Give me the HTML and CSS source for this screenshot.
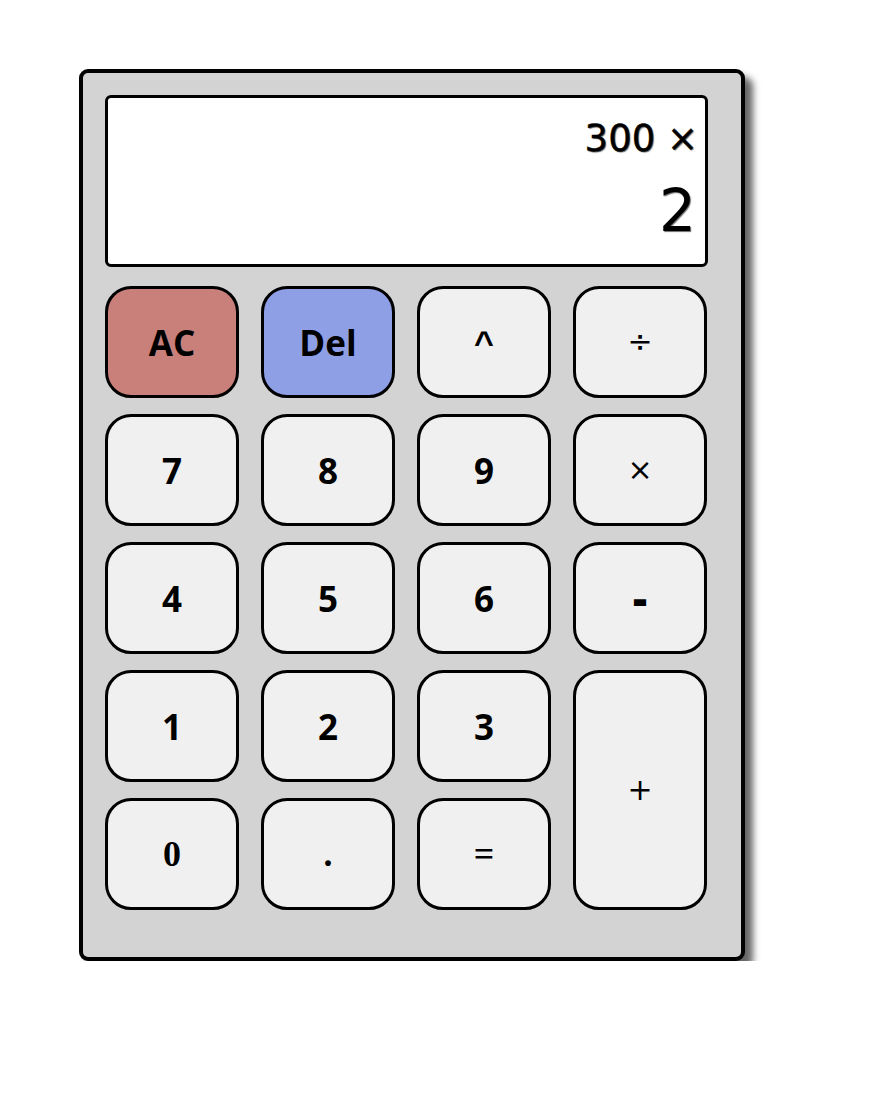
FILE: index.html
```html
<!DOCTYPE html>
<html>
<head>
<meta charset="utf-8">
<title>Calculator</title>
<link rel="stylesheet" href="styles.css">
</head>
<body>
<div class="calc">
  <div class="display">
    <div class="prev">300 ×</div>
    <div class="curr">2</div>
  </div>
  <div class="keys">
    <button class="key ac">AC</button>
    <button class="key del">Del</button>
    <button class="key caret">^</button>
    <button class="key sym">÷</button>
    <button class="key">7</button>
    <button class="key">8</button>
    <button class="key">9</button>
    <button class="key sym">×</button>
    <button class="key">4</button>
    <button class="key">5</button>
    <button class="key">6</button>
    <button class="key minus">-</button>
    <button class="key">1</button>
    <button class="key">2</button>
    <button class="key">3</button>
    <button class="key sym plus">+</button>
    <button class="key serif">0</button>
    <button class="key serif">.</button>
    <button class="key serif">=</button>
  </div>
</div>
</body>
</html>
```
FILE: styles.css
```css
html, body {
  margin: 0;
  padding: 0;
  background: #ffffff;
}

.calc {
  box-sizing: border-box;
  width: 666px;
  height: 892px;
  margin: 69px 0 0 79px;
  padding: 22px 33px 0 22px;
  background: #d3d3d3;
  border: 4px solid #000;
  border-radius: 9px;
  box-shadow: 8px 8px 7px #666666;
}

.display {
  box-sizing: border-box;
  width: 603px;
  height: 172px;
  background: #ffffff;
  border: 3px solid #000;
  border-radius: 6px;
  padding: 21px 7px 0 0;
  text-align: right;
  font-family: "DejaVu Sans", sans-serif;
  color: #000;
  text-shadow: 1px 1px 1px #6a6a6a;
}

.prev {
  font-size: 37px;
  line-height: 40px;
  -webkit-text-stroke: 0.4px #000;
}

.curr {
  font-size: 58px;
  line-height: 66px;
  margin-top: 19px;
  padding-right: 2px;
}

.keys {
  margin-top: 19px;
  display: grid;
  grid-template-columns: repeat(4, 134px);
  grid-template-rows: repeat(5, 112px);
  column-gap: 22px;
  row-gap: 16px;
  width: 602px;
}

.key {
  box-sizing: border-box;
  margin: 0;
  padding: 0;
  background: #f0f0f0;
  border: 3px solid #000;
  border-radius: 26px;
  font-family: "Open Sans", "DejaVu Sans", sans-serif;
  font-weight: 700;
  font-size: 35px;
  color: #000;
  display: flex;
  align-items: center;
  justify-content: center;
  line-height: 1;
}

.ac {
  background: #c97f7a;
}

.del {
  background: #8f9fe6;
}

.sym {
  font-family: "DejaVu Sans", sans-serif;
  font-weight: 400;
  font-size: 30px;
}

.caret {
  font-family: "Liberation Sans", sans-serif;
  font-weight: 700;
  font-size: 34px;
}

.minus {
  font-weight: 800;
  font-size: 44px;
}

.plus {
  grid-column: 4;
  grid-row: 4 / span 2;
}

.serif {
  font-family: "Liberation Serif", serif;
  font-weight: 700;
  font-size: 36px;
}
```
